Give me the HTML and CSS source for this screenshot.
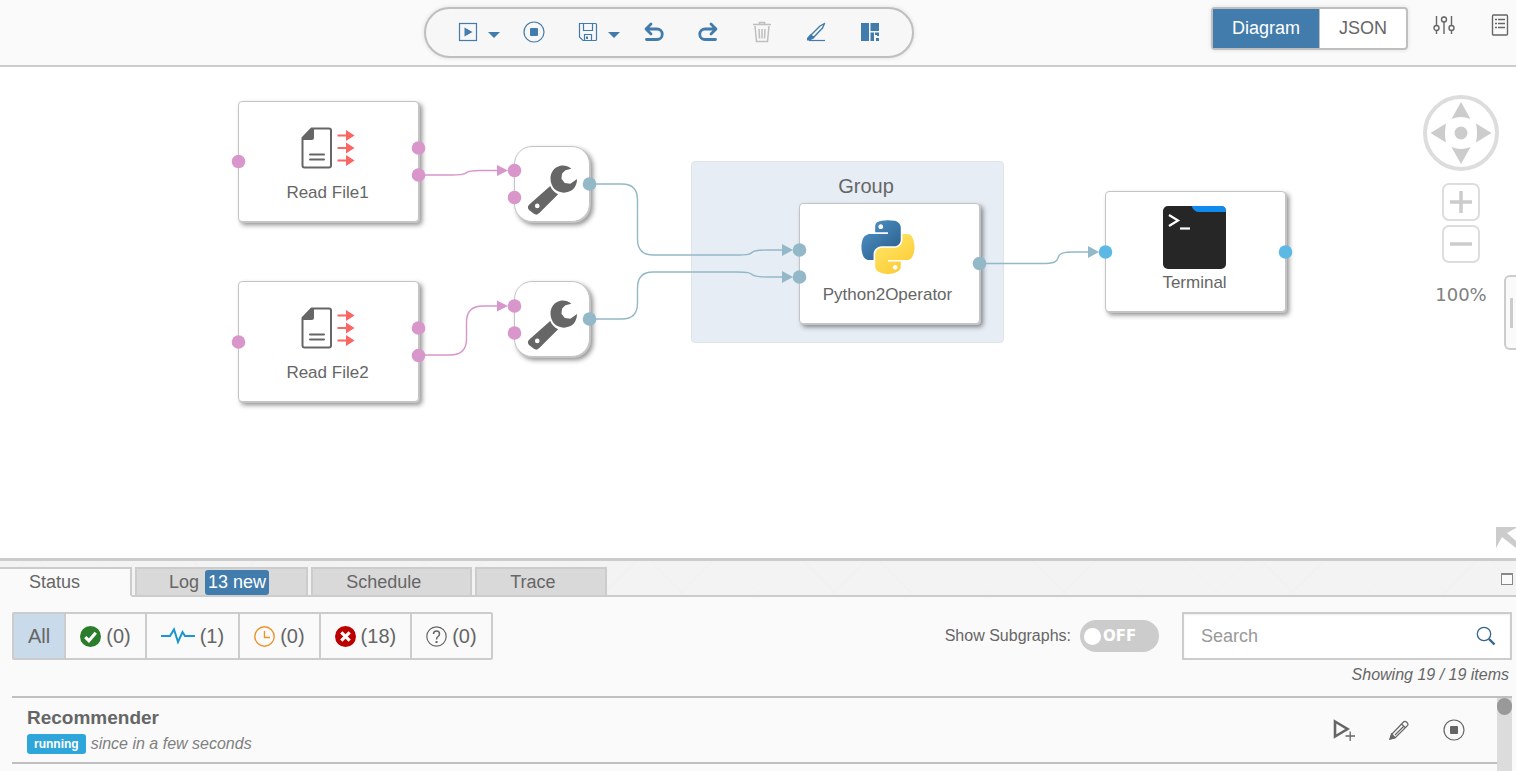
FILE: index.html
```html
<!DOCTYPE html>
<html lang="en">
<head>
<meta charset="utf-8">
<title>Pipeline Modeler</title>
<link rel="stylesheet" href="styles.css">
</head>
<body>
<svg class="defs" width="0" height="0" aria-hidden="true">
  <defs>
    <linearGradient id="py-blue" x1="0" y1="0" x2="0.8" y2="0.9">
      <stop offset="0" stop-color="#5196cb"/><stop offset="1" stop-color="#2d6290"/>
    </linearGradient>
    <linearGradient id="py-yellow" x1="0.2" y1="0.1" x2="0.7" y2="0.9">
      <stop offset="0" stop-color="#ffe565"/><stop offset="1" stop-color="#fccd38"/>
    </linearGradient>
    <symbol id="read-file" viewBox="0 0 54 42">
      <path d="M10.500 1.500H28Q30 1.500 30 3.500V38.500Q30 40.500 28 40.500H3.500Q1.500 40.500 1.500 38.500V11Z" fill="#fff" stroke="#666" stroke-width="2"/>
      <path d="M11 1H13V10.500Q13 13 10.500 13H1V11Z" fill="#666"/>
      <path d="M9 27.500H23M9 32.500H23" stroke="#666" stroke-width="2" stroke-linecap="round"/>
      <path d="M36.500 8.500H47M36.500 21H47M36.500 33.500H47" stroke="#fa6663" stroke-width="2"/>
      <path d="M45 3V14L53.500 8.500ZM45 15.500V26.500L53.500 21ZM45 28V39L53.500 33.500Z" fill="#fa6663"/>
    </symbol>
    <symbol id="wrench" viewBox="0 0 160 156">
      <path d="M137 14C126 4 113 3 104 5C85 9 73 26 74 45C75 70 92 86 114 86C138 86 154 70 154 45L134 59L117 57L107 44L109 28L119 18Z" fill="#666"/>
      <path fill-rule="evenodd" d="M73 66Q80 82 97 91L41 147Q33 156 24 150L9 138Q2 130 10 122ZM34 119A7 7 0 1 0 34 133A7 7 0 1 0 34 119Z" fill="#666"/>
    </symbol>
  </defs>
</svg>

<header class="topbar">
  <div class="toolbar" role="toolbar" aria-label="Graph actions">
    <div class="split">
      <button class="tool" aria-label="Run"><svg width="20" height="20" viewBox="0 0 20 20"><rect x="1.500" y="1.500" width="17" height="17" fill="none" stroke="currentColor" stroke-width="1.200"/><path d="M6.500 5.500L14.500 10L6.500 14.500Z" fill="currentColor"/></svg></button>
      <button class="caret" aria-label="Run options"><svg width="12" height="6" viewBox="0 0 12 6"><path d="M0 0H12L6 6Z" fill="currentColor"/></svg></button>
    </div>
    <button class="tool" aria-label="Stop"><svg width="22" height="22" viewBox="0 0 22 22"><circle cx="11" cy="11" r="10" fill="none" stroke="currentColor" stroke-width="1.200"/><rect x="7" y="7" width="8" height="8" rx="1" fill="currentColor"/></svg></button>
    <div class="split">
      <button class="tool" aria-label="Save"><svg width="20" height="20" viewBox="0 0 20 20" fill="none" stroke="currentColor" stroke-width="1.200"><path d="M1.500 1.500H17.500Q18.500 1.500 18.500 2.500V17.500Q18.500 18.500 17.500 18.500H5L1.500 15Z"/><path d="M5.500 1.500V8.500H14.500V1.500M6.500 18.500V12.500H13.500V18.500"/><path d="M9 14.500V17" stroke-width="2"/></svg></button>
      <button class="caret" aria-label="Save options"><svg width="12" height="6" viewBox="0 0 12 6"><path d="M0 0H12L6 6Z" fill="currentColor"/></svg></button>
    </div>
    <button class="tool" aria-label="Undo"><svg width="20" height="20" viewBox="0 0 20 20" fill="none" stroke="currentColor" stroke-width="2.800" stroke-linecap="round" stroke-linejoin="round"><path d="M7 2L2 7H13A5.250 5.250 0 0 1 13 17.500H2.500M2 7L7 12"/></svg></button>
    <button class="tool" aria-label="Redo"><svg width="20" height="20" viewBox="0 0 20 20" fill="none" stroke="currentColor" stroke-width="2.800" stroke-linecap="round" stroke-linejoin="round"><path d="M13 2L18 7H7A5.250 5.250 0 0 0 7 17.500H17.500M18 7L13 12"/></svg></button>
    <button class="tool tool-off" aria-label="Delete" disabled><svg width="20" height="22" viewBox="0 0 20 22" fill="none" stroke="currentColor" stroke-width="1.500"><path d="M1 3.500H19M7.500 3V1.500H12.500V3M3 5L4.500 20.500H15.500L17 5M7 8L7.500 17.500M10 8V17.500M13 8L12.500 17.500"/></svg></button>
    <button class="tool" aria-label="Edit"><svg width="20" height="20" viewBox="0 0 20 20"><path d="M18.500 1.500L14 4L5 13L7.500 15.500L16.500 6Z" fill="none" stroke="currentColor" stroke-width="1.400" stroke-linejoin="round"/><path d="M4.500 12L8.500 16L4 18.500H1V16Z" fill="currentColor"/><path d="M3 18.500H19" stroke="currentColor" stroke-width="1.200"/></svg></button>
    <button class="tool" aria-label="Auto layout"><svg width="20" height="20" viewBox="0 0 20 20" fill="currentColor"><path d="M1 1H9V19H1ZM10.500 1H19V9H10.500ZM10.500 10.500H14V19H10.500ZM15 10.500H19V14H17V13H15ZM16 16H19V19H16Z"/></svg></button>
  </div>
  <div class="topbar-right">
    <div class="switch">
      <button class="switch-item switch-on">Diagram</button><button class="switch-item">JSON</button>
    </div>
    <button class="plain" aria-label="Settings"><svg width="22" height="22" viewBox="0 0 22 22" fill="none" stroke="currentColor" stroke-width="1.400"><path d="M3.500 2V11.500M3.500 16.500V20M11 2.500V3M11 8V20M18.500 2V11.500M18.500 16.500V20"/><circle cx="3.500" cy="14" r="2.500"/><circle cx="11" cy="5.500" r="2.500"/><circle cx="18.500" cy="14" r="2.500"/></svg></button>
    <button class="plain" aria-label="Configuration"><svg width="22" height="22" viewBox="0 0 22 22" fill="none" stroke="currentColor" stroke-width="1.400"><rect x="3.500" y="1" width="15" height="20" rx="1"/><path d="M6 5.500H8M9 5.500H16M6 9.500H8M9 9.500H16M6 13.500H8M9 13.500H16"/></svg></button>
  </div>
</header>

<main class="canvas">
  <section class="group"><h2 class="group-title">Group</h2></section>
  <div class="node node-read1"><svg width="54" height="42"><use href="#read-file"/></svg><span>Read File1</span></div>
  <div class="node node-read2"><svg width="54" height="42"><use href="#read-file"/></svg><span>Read File2</span></div>
  <div class="node-small node-conv1"><svg width="53" height="52"><use href="#wrench"/></svg></div>
  <div class="node-small node-conv2"><svg width="53" height="52"><use href="#wrench"/></svg></div>
  <div class="node node-python">
    <svg width="54" height="54" viewBox="12.500 1.500 103 104"><path fill="url(#py-blue)" d="M63.391 1.988c-4.222.02-8.252.379-11.8 1.007-10.45 1.846-12.346 5.71-12.346 12.837v9.411h24.693v3.137H29.977c-7.176 0-13.46 4.313-15.426 12.521-2.268 9.405-2.368 15.275 0 25.096 1.755 7.311 5.947 12.519 13.124 12.519h8.491V67.234c0-8.151 7.051-15.34 15.426-15.34h24.665c6.866 0 12.346-5.654 12.346-12.548V15.833c0-6.693-5.646-11.72-12.346-12.837-4.244-.706-8.645-1.027-12.866-1.008zM50.037 9.557c2.55 0 4.634 2.117 4.634 4.721 0 2.593-2.083 4.69-4.634 4.69-2.56 0-4.633-2.097-4.633-4.69-.001-2.604 2.073-4.721 4.633-4.721z"/><path fill="url(#py-yellow)" d="M91.682 28.38v10.966c0 8.5-7.208 15.655-15.426 15.655H51.591c-6.756 0-12.346 5.783-12.346 12.549v23.515c0 6.691 5.818 10.628 12.346 12.547 7.816 2.297 15.312 2.713 24.665 0 6.216-1.801 12.346-5.423 12.346-12.547v-9.412H63.938v-3.138h37.012c7.176 0 9.852-5.005 12.348-12.519 2.578-7.735 2.467-15.174 0-25.096-1.774-7.145-5.161-12.521-12.348-12.521h-9.268zM77.809 87.927c2.561 0 4.634 2.097 4.634 4.692 0 2.602-2.074 4.719-4.634 4.719-2.55 0-4.633-2.117-4.633-4.719 0-2.595 2.083-4.692 4.633-4.692z"/></svg>
    <span>Python2Operator</span>
  </div>
  <div class="node node-terminal">
    <svg width="63" height="63" viewBox="0 0 63 63"><rect width="63" height="63" rx="5" fill="#262626"/><path d="M28.500 0H58Q63 0 63 5V6H36Q31 6 28.500 0Z" fill="#0f8bee"/><path d="M6 9L15 14.500L6 20" fill="none" stroke="#fff" stroke-width="2.200"/><path d="M17 22.500H27" stroke="#fff" stroke-width="2.200"/></svg>
    <span>Terminal</span>
  </div>
  <svg class="wires" aria-hidden="true">
    <g class="wire wire-pink">
      <path d="M418 108H452C464 108 464 107 466 106C468 104 472 103.500 480 103.500H497"/>
      <path d="M418 288H450Q466.500 288 466.500 272V255Q466.500 239 483 239H497"/>
    </g>
    <g class="wire wire-teal">
      <path d="M590 117H622Q637.500 117 637.500 133V172Q637.500 188 653 188H736C749 188 750 187 752 185.500C754 183.500 760 183 768 183H782"/>
      <path d="M590 252H622Q637.500 252 637.500 236V221Q637.500 205 653 205H736C749 205 750 206 752 207.500C754 209.500 760 210 768 210H782"/>
      <path d="M980 196.500H1042C1054 196.500 1057 195 1058 191C1059 186 1063 185 1075 185H1088"/>
    </g>
    <path class="fill-pink" d="M497 98V109L508 103.500ZM497 233.500V244.500L508 239Z"/>
    <path class="fill-teal" d="M782 177V189L793 183ZM782 204V216L793 210ZM1088 179V191L1099 185Z"/>
    <g class="fill-pink">
      <circle cx="238.500" cy="94.500" r="6.800"/><circle cx="418.500" cy="81" r="6.800"/><circle cx="418.500" cy="108" r="6.800"/>
      <circle cx="514.500" cy="103.500" r="6.800"/><circle cx="514.500" cy="130.500" r="6.800"/>
      <circle cx="238.500" cy="275" r="6.800"/><circle cx="418.500" cy="261" r="6.800"/><circle cx="418.500" cy="288.500" r="6.800"/>
      <circle cx="514.500" cy="239" r="6.800"/><circle cx="514.500" cy="266" r="6.800"/>
    </g>
    <g class="fill-teal">
      <circle cx="589.500" cy="117" r="6.800"/><circle cx="589.500" cy="252" r="6.800"/>
      <circle cx="799.500" cy="183" r="6.800"/><circle cx="799.500" cy="210" r="6.800"/><circle cx="979.500" cy="196.500" r="6.800"/>
    </g>
    <g class="fill-blue"><circle cx="1105.500" cy="185" r="6.800"/><circle cx="1285.500" cy="185" r="6.800"/></g>
  </svg>

  <div class="nav">
    <svg class="nav-pad" width="76" height="76" viewBox="0 0 76 76"><circle cx="38" cy="38" r="36" fill="none" stroke="#ddd" stroke-width="4"/><g fill="#ccc"><circle cx="38" cy="38" r="6.500"/><path d="M38 7L47.500 24Q38 20 28.500 24ZM38 69L47.500 52Q38 56 28.500 52ZM7.500 38L23 28.500Q21 38 23 47.500ZM68.500 38L53 28.500Q55 38 53 47.500Z"/></g></svg>
    <button class="zoom" aria-label="Zoom in"><svg width="24" height="24" viewBox="0 0 24 24"><path d="M1 12H23M12 1V23" stroke="#ccc" stroke-width="3.500"/></svg></button>
    <button class="zoom" aria-label="Zoom out"><svg width="24" height="24" viewBox="0 0 24 24"><path d="M1 12H23" stroke="#ccc" stroke-width="3.500"/></svg></button>
    <span class="zoom-level">100%</span>
  </div>
  <div class="drawer"><span class="drawer-grip"></span></div>
  <svg class="corner" width="20" height="22" viewBox="0 0 20 22"><path d="M0 0H20V1L11 6L20 14V21L6 10L0 21Z" fill="#ccc"/></svg>
</main>

<section class="panel">
  <nav class="tabs">
    <button class="tab tab-on">Status</button>
    <button class="tab tab-log">Log <span class="tab-badge">13 new</span></button>
    <button class="tab">Schedule</button>
    <button class="tab">Trace</button>
    <span class="tabs-rest"><button class="plain" aria-label="Maximize"><svg width="14" height="14" viewBox="0 0 14 14"><rect x="1.500" y="1.500" width="11" height="11" fill="#fafafa" stroke="#888"/><path d="M1 2H13" stroke="#888" stroke-width="2"/></svg></button></span>
  </nav>
  <div class="body">
    <div class="filters">
      <div class="filter-set">
        <button class="filter filter-on">All</button>
        <button class="filter"><svg width="21" height="21" viewBox="0 0 20 20"><circle cx="10" cy="10" r="10" fill="#2b7d2b"/><path d="M5 10.500L8.500 14L15 6.500" fill="none" stroke="#fff" stroke-width="3"/></svg>(0)</button>
        <button class="filter"><svg width="34" height="20" viewBox="0 0 34 20"><path d="M0 10H9L13 3.500L17 16L21.500 6L24 10H34" fill="none" stroke="#1b96ce" stroke-width="2"/></svg>(1)</button>
        <button class="filter"><svg width="21" height="21" viewBox="0 0 21 21" fill="none" stroke="#e9952e" stroke-width="1.400"><circle cx="10.500" cy="10.500" r="9.700"/><path d="M10.500 5V11.500H16"/></svg>(0)</button>
        <button class="filter"><svg width="21" height="21" viewBox="0 0 20 20"><circle cx="10" cy="10" r="10" fill="#b00"/><path d="M6 6L14 14M14 6L6 14" stroke="#fff" stroke-width="3"/></svg>(18)</button>
        <button class="filter"><svg width="21" height="21" viewBox="0 0 21 21" fill="none" stroke="#666" stroke-width="1.200"><circle cx="10.500" cy="10.500" r="9.700"/><path d="M7.500 8Q7.500 5 10.500 5T13.500 8Q13.500 9.500 12 10.500T10.500 13.500" stroke-width="1.500"/><path d="M10.500 15V17" stroke-width="2"/></svg>(0)</button>
      </div>
      <div class="find">
        <label for="subgraphs">Show Subgraphs:</label>
        <label class="toggle"><input class="toggle-knob" type="checkbox" id="subgraphs"><span>OFF</span></label>
        <div class="search">
          <input class="search-input" type="text" placeholder="Search" aria-label="Search">
          <button aria-label="Find"><svg width="20" height="20" viewBox="0 0 20 20" fill="none" stroke="#34658f"><circle cx="8" cy="8" r="6.700" stroke-width="1.300"/><path d="M13 13L18.500 18.500" stroke-width="2.400"/></svg></button>
        </div>
      </div>
    </div>
    <p class="count">Showing 19 / 19 items</p>
    <div class="list">
      <div class="rows">
        <article class="row">
          <div>
            <h3 class="row-title">Recommender</h3>
            <p class="row-meta"><span class="state">running</span><em>since in a few seconds</em></p>
          </div>
          <div class="row-actions">
            <button class="plain" aria-label="Run again"><svg width="24" height="24" viewBox="0 0 24 24" fill="none" stroke="currentColor"><path d="M3 3.500L15.500 11L3 18.500Z" stroke-width="2.600"/><path d="M13.500 18H23M18.200 13.500V23" stroke-width="1.300"/></svg></button>
            <button class="plain" aria-label="Edit"><svg width="24" height="24" viewBox="0 0 24 24" fill="none" stroke="currentColor" stroke-width="1.200"><path d="M5 16L16.500 4Q18 2.500 20 4.500T20 8L8 20L3 21ZM14.500 6L18 9.500M8 17L17 8"/><path d="M4.500 16L8 19.500L3 21Z" fill="currentColor"/></svg></button>
            <button class="plain" aria-label="Stop"><svg width="24" height="24" viewBox="0 0 24 24"><circle cx="12" cy="12" r="10" fill="none" stroke="currentColor" stroke-width="1.200"/><rect x="8" y="8" width="8" height="8" rx="1" fill="currentColor"/></svg></button>
          </div>
        </article>
      </div>
      <div class="scroll"><span class="scroll-thumb"></span></div>
    </div>
  </div>
</section>
</body>
</html>
```
FILE: styles.css
```css
* { box-sizing: border-box; }
body {
  margin: 0;
  min-height: 100vh;
  display: flex;
  flex-direction: column;
  overflow: hidden;
  background: #fff;
  color: #666;
  font-family: "Liberation Sans", Arial, sans-serif;
  font-size: 16px;
}
h2, h3, p { margin: 0; }
svg { display: block; }
.defs { position: absolute; }
button {
  margin: 0;
  padding: 0;
  border: 0;
  background: none;
  color: inherit;
  font: inherit;
}

/* Top bar */
.topbar {
  display: flex;
  align-items: center;
  justify-content: space-between;
  padding: 7px 5px 7px 28%;
  background: #fafafa;
  border-bottom: 2px solid #ccc;
}
.toolbar {
  display: flex;
  align-items: center;
  gap: 10px;
  height: 51px;
  padding: 0 20px 2px;
  border: 2px solid #bfbfbf;
  border-radius: 26px;
  background: #f7f7f7;
  box-shadow: 0 0 4px #ddd;
  color: #427cac;
}
.split { display: flex; align-items: center; }
.tool {
  display: flex;
  align-items: center;
  justify-content: center;
  width: 44px;
  height: 32px;
}
.split .tool { width: 42px; padding-right: 0; justify-content: flex-end; padding-right: 10px; }
.tool-off { color: #bfbfbf; }
.caret { width: 14px; padding-top: 7px; }
.topbar-right {
  display: flex;
  align-items: center;
  align-self: flex-start;
  gap: 34px;
}
.switch {
  display: flex;
  height: 43px;
  margin-right: -9px;
  border: 2px solid #bfbfbf;
  border-radius: 4px;
  background: #fff;
  box-shadow: 0 0 4px #ddd;
  font-size: 18px;
}
.switch-item { padding: 0 19px; }
.switch-on {
  border-right: 1px solid #bfbfbf;
  background: #427cac;
  color: #fff;
}
.topbar-right .plain { padding-bottom: 7px; }

/* Diagram */
.canvas {
  position: relative;
  flex: 1 0 auto;
  min-height: 420px;
  overflow: hidden;
}
.group {
  position: absolute;
  left: 691px;
  top: 94px;
  width: 313px;
  height: 182px;
  padding: 12px 0 0 37px;
  border: 1px solid #dfe4e8;
  border-radius: 4px;
  background: #e6edf5;
  text-align: center;
}
.group-title { font-size: 20px; font-weight: 400; line-height: 24px; }
.node, .node-small {
  position: absolute;
  display: flex;
  flex-direction: column;
  align-items: center;
  border: 1px solid #c4c4c4;
  background: #fff;
  box-shadow: 1px 1px 0 #c4c4c4, 3px 3px 5px rgba(0, 0, 0, 0.45);
}
.node {
  width: 181px;
  height: 121px;
  padding: 0 2px 18px 0;
  border-radius: 4px;
  justify-content: flex-end;
  gap: 14px;
  font-size: 17px;
  line-height: 20px;
}
.node-small {
  width: 76px;
  height: 76px;
  border-radius: 18px;
  justify-content: center;
}
.node-read1 { left: 238px; top: 34px; }
.node-read2 { left: 238px; top: 214px; }
.node-conv1 { left: 514px; top: 79px; padding-top: 12px; }
.node-conv2 { left: 514px; top: 214px; padding-top: 12px; }
.node-python { left: 799px; top: 136px; padding-right: 4px; gap: 11px; }
.node-terminal { left: 1105px; top: 124px; gap: 4px; }
.wires {
  position: absolute;
  left: 0;
  top: 0;
  width: 100%;
  height: 100%;
  pointer-events: none;
}
.wire { fill: none; stroke-width: 1.4; }
.wire-pink { stroke: #d896cb; }
.wire-teal { stroke: #93b8c7; }
.fill-pink { fill: #d896cb; }
.fill-teal { fill: #93b8c7; }
.fill-blue { fill: #5cb8e4; }

.nav {
  position: absolute;
  right: 17px;
  top: 28px;
  display: flex;
  flex-direction: column;
  align-items: center;
  gap: 4px;
}
.nav-pad { margin-bottom: 8px; }
.zoom {
  display: flex;
  align-items: center;
  justify-content: center;
  width: 38px;
  height: 38px;
  border: 2px solid #ddd;
  border-radius: 7px;
}
.zoom-level {
  padding-top: 17px;
  color: #808080;
  font-family: "DejaVu Sans", Verdana, sans-serif;
  font-size: 18px;
  line-height: 22px;
}
.drawer {
  position: absolute;
  right: 0;
  top: 208px;
  display: flex;
  align-items: center;
  width: 12px;
  height: 75px;
  padding-left: 4px;
  border: 2px solid #ccc;
  border-right: 0;
  border-radius: 6px 0 0 6px;
  background: #fafafa;
}
.drawer-grip { width: 3px; height: 30px; background: #ccc; }
.corner { position: absolute; right: 0; bottom: 9px; }

/* Bottom panel */
.panel { border-top: 3px solid #ccc; background: #fafafa; }
.tabs {
  display: flex;
  align-items: stretch;
  gap: 3px;
  padding-top: 6px;
  background:
    repeating-linear-gradient(45deg, transparent 0 53px, #f1f1f1 53px 54px),
    repeating-linear-gradient(-45deg, transparent 0 53px, #f1f1f1 53px 54px),
    #f3f3f3;
  box-shadow: inset 0 -2px 0 #ccc;
  font-size: 18px;
  line-height: 26px;
}
.tab {
  height: 30px;
  padding: 0 49px 0 33px;
  border: 2px solid #ccc;
  background: #d9d9d9;
  display: flex;
  align-items: center;
  gap: 6px;
}
.tab-on {
  padding-left: 29px;
  padding-right: 50px;
  border-left: 0;
  border-bottom-color: #fafafa;
  background: #fafafa;
}
.tab-log { padding-right: 37px; padding-left: 32px; }
.tab-badge {
  padding: 0 3px;
  border-radius: 3px;
  background: #427cac;
  color: #fff;
  line-height: 25px;
}
.tabs-rest {
  flex: 1;
  display: flex;
  align-items: center;
  justify-content: flex-end;
  padding: 0 2px 6px 0;
}
.body { padding: 15px 4px 0 12px; }
.filters { display: flex; justify-content: space-between; }
.filter-set {
  display: flex;
  height: 48px;
  border: 2px solid #ccc;
  border-radius: 2px;
  font-size: 20px;
}
.filter {
  display: flex;
  align-items: center;
  gap: 5px;
  padding: 0 14px;
}
.filter + .filter { border-left: 2px solid #ccc; }
.filter-on { background: #c9daea; }
.find { display: flex; align-items: center; }
.toggle {
  display: flex;
  align-items: center;
  gap: 2px;
  width: 79px;
  height: 32px;
  margin: 0 23px 0 9px;
  padding: 0 4px;
  border-radius: 16px;
  background: #ccc;
  color: #fff;
  font-family: "DejaVu Sans", Verdana, sans-serif;
  font-size: 15px;
  font-weight: 700;
}
.toggle-knob {
  appearance: none;
  width: 17px;
  height: 17px;
  margin: 0;
  border-radius: 50%;
  background: #fff;
}
.search {
  display: flex;
  align-items: center;
  width: 330px;
  height: 48px;
  padding: 0 14px 0 17px;
  border: 2px solid #ccc;
  background: #fff;
  box-shadow: inset 0 1px 2px #eee;
}
.search-input {
  flex: 1;
  min-width: 0;
  padding: 0;
  border: 0;
  outline: 0;
  background: none;
  color: #666;
  font: inherit;
  font-size: 18px;
}
.search-input::placeholder { color: #999; opacity: 1; }
.count {
  padding: 5px 3px 11px 0;
  font-style: italic;
  line-height: 20px;
  text-align: right;
}
.list { display: flex; border-top: 2px solid #bfbfbf; }
.rows { flex: 1; padding-bottom: 7px; }
.row {
  display: flex;
  justify-content: space-between;
  align-items: flex-start;
  padding: 8px 31px 6px 15px;
  border-bottom: 2px solid #bfbfbf;
}
.row-title { font-size: 19px; line-height: 24px; }
.row-meta {
  display: flex;
  align-items: center;
  gap: 5px;
  padding-top: 2px;
  color: #808080;
  line-height: 24px;
}
.state {
  padding: 0 7px;
  border-radius: 3px;
  background: #2fa6d9;
  color: #fff;
  font-size: 12px;
  font-weight: 700;
  line-height: 20px;
}
.row-actions { display: flex; gap: 31px; padding-top: 12px; }
.scroll { width: 15px; background: #dcdcdc; }
.scroll-thumb {
  display: block;
  height: 17px;
  border-radius: 8px;
  background: #999;
}
```
